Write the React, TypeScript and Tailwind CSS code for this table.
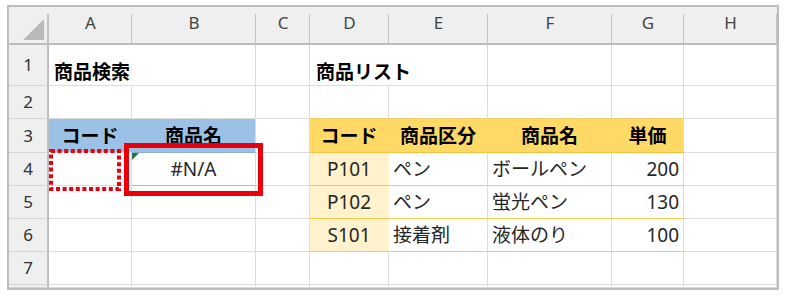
import type { ReactNode } from 'react'

const FONT = "font-['Noto_Sans','Noto_Sans_CJK_JP',sans-serif]"

type Align = 'left' | 'center' | 'right'

interface CellProps {
  children?: ReactNode
  className?: string
  align?: Align
  bold?: boolean
  span?: number
}

function Cell({ children, className = '', align = 'left', bold = false, span = 1 }: CellProps) {
  const justify = align === 'center' ? 'justify-center' : align === 'right' ? 'justify-end pr-[4px]' : 'justify-start pl-[4px]'
  return (
    <div
      className={`relative flex items-center border-r border-b border-[#dcdcdc] text-[19px] leading-[24px] whitespace-nowrap ${justify} ${
        bold ? 'font-bold text-black' : 'text-[#262626]'
      } ${span === 2 ? 'col-span-2' : ''} ${className}`}
    >
      {children}
    </div>
  )
}

function ColHead({ label }: { label: string }) {
  return (
    <div className="relative flex items-center justify-center pb-[4px] bg-[#efefef] border-b-2 border-[#bdbdbd] text-[17px] text-[#444]">
      {label}
      <span className="absolute right-0 top-[7px] bottom-0 w-px bg-[#c4c4c4]" />
    </div>
  )
}

function RowHead({ n }: { n?: string }) {
  return (
    <div className="flex items-center justify-center bg-[#efefef] border-r-2 border-b border-r-[#bdbdbd] border-b-[#d4d4d4] text-[17px] text-[#333]">
      {n}
    </div>
  )
}

const GOLD_HEAD = 'bg-[#ffd966] border-b-[#f5c342]'
const GOLD_SIDE = 'bg-[#fff2cc] border-r-[#fff2cc] border-b-[#f7c94a]'
const GOLD_ROW = 'border-b-[#f7c94a]'

export default function App() {
  const data = [
    { n: '5', code: 'P102', cat: 'ペン', name: '蛍光ペン', price: '130' },
    { n: '6', code: 'S101', cat: '接着剤', name: '液体のり', price: '100' },
  ]

  return (
    <div className={`relative w-[786px] h-[297px] bg-white pt-[5px] pl-[7px] ${FONT}`}>
      <div className="w-[772px] h-[285px] border-2 border-[#bdbdbd] overflow-hidden">
        <div className="grid grid-cols-[40px_83px_124px_54px_79px_99px_124px_72px_93px] grid-rows-[38px_41px_33px_34px_33px_33px_33px_33px_3px]">
          {/* column headers */}
          <div className="relative bg-[#efefef] border-b-2 border-[#bdbdbd]">
            <div className="absolute left-[14px] top-[12px] w-[21px] h-[21px] bg-[#b9b9b9] [clip-path:polygon(100%_0,100%_100%,0_100%)]" />
            <span className="absolute right-0 top-[7px] bottom-0 w-[2px] bg-[#c4c4c4]" />
          </div>
          {['A', 'B', 'C', 'D', 'E', 'F', 'G', 'H'].map((c) => (
            <ColHead key={c} label={c} />
          ))}

          {/* row 1 */}
          <RowHead n="1" />
          <Cell span={2} bold className="!items-end pb-[1px] !pl-[5px]">商品検索</Cell>
          <Cell />
          <Cell span={2} bold className="!items-end pb-[1px] !pl-[6px]">商品リスト</Cell>
          <Cell />
          <Cell />
          <Cell />

          {/* row 2 */}
          <RowHead n="2" />
          <Cell />
          <Cell />
          <Cell />
          <Cell className="border-b-[#f2cf6a]" />
          <Cell className="border-b-[#f2cf6a]" />
          <Cell className="border-b-[#f2cf6a]" />
          <Cell className="border-b-[#f2cf6a]" />
          <Cell />

          {/* row 3 */}
          <RowHead n="3" />
          <Cell bold align="center" className="bg-[#9bc2e6] border-r-[#9bc2e6]">コード</Cell>
          <Cell bold align="center" className="bg-[#9bc2e6] border-b-[#8aaed6]">商品名</Cell>
          <Cell />
          <Cell bold align="center" className={`${GOLD_HEAD} border-r-[#ffd966]`}>コード</Cell>
          <Cell bold align="center" className={`${GOLD_HEAD} border-r-[#ffd966]`}>商品区分</Cell>
          <Cell bold align="center" className={`${GOLD_HEAD} border-r-[#ffd966]`}>商品名</Cell>
          <Cell bold align="center" className={GOLD_HEAD}>単価</Cell>
          <Cell />

          {/* row 4 */}
          <RowHead n="4" />
          <Cell />
          <Cell align="center" className="border-b-[#9bc2e6]">
            <div className="absolute left-0 top-0 w-[7px] h-[7px] bg-[#1f7a3c] [clip-path:polygon(0_0,100%_0,0_100%)]" />
            #N/A
          </Cell>
          <Cell />
          <Cell align="center" className={GOLD_SIDE}>P101</Cell>
          <Cell className={GOLD_ROW}>ペン</Cell>
          <Cell className={GOLD_ROW}>ボールペン</Cell>
          <Cell align="right" className={GOLD_ROW}>200</Cell>
          <Cell />

          {data.map((r) => (
            <div key={r.n} className="contents">
              <RowHead n={r.n} />
              <Cell />
              <Cell />
              <Cell />
              <Cell align="center" className={GOLD_SIDE}>{r.code}</Cell>
              <Cell className={GOLD_ROW}>{r.cat}</Cell>
              <Cell className={GOLD_ROW}>{r.name}</Cell>
              <Cell align="right" className={GOLD_ROW}>{r.price}</Cell>
              <Cell />
            </div>
          ))}

          {/* row 7 */}
          <RowHead n="7" />
          {Array.from({ length: 8 }).map((_, i) => (
            <Cell key={`r7-${i}`} />
          ))}

          {/* row 8 sliver */}
          <RowHead />
          {Array.from({ length: 8 }).map((_, i) => (
            <Cell key={`r8-${i}`} />
          ))}
        </div>
      </div>

      {/* annotation: dotted input cell */}
      <svg className="absolute left-[49px] top-[149px]" width="72" height="42" viewBox="0 0 72 42">
        <rect x="2" y="2" width="68" height="38" fill="none" stroke="#e8000b" strokeWidth="4" strokeDasharray="4 2.6" />
      </svg>

      {/* annotation: result cell */}
      <div className="absolute left-[124px] top-[143px] w-[139px] h-[53px] border-[5px] border-[#e8000b]" />
    </div>
  )
}
